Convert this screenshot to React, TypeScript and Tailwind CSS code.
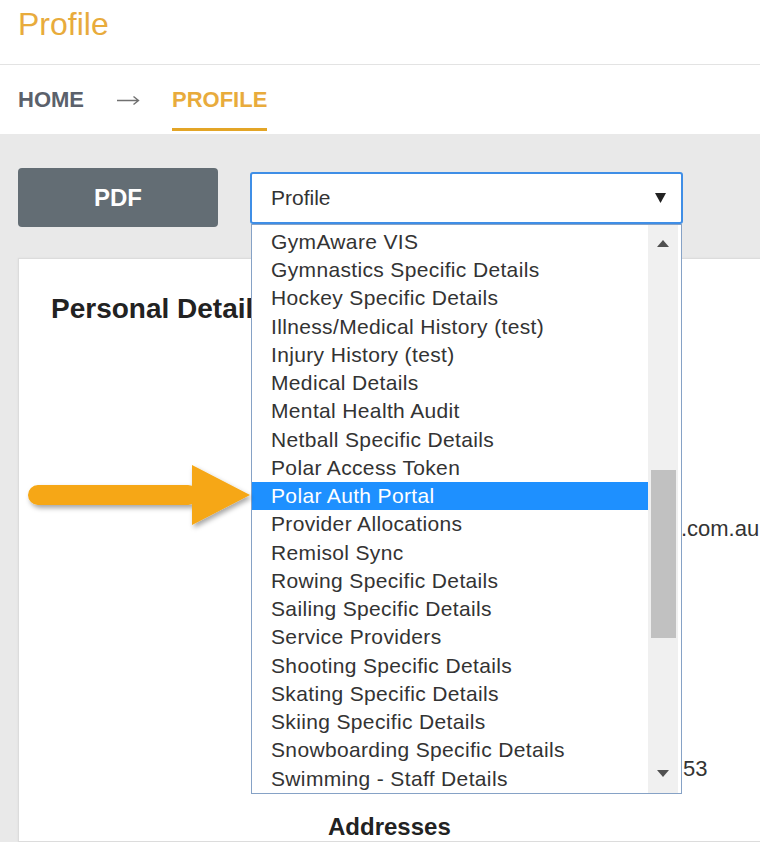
const OPTIONS = [
  "GymAware VIS",
  "Gymnastics Specific Details",
  "Hockey Specific Details",
  "Illness/Medical History (test)",
  "Injury History (test)",
  "Medical Details",
  "Mental Health Audit",
  "Netball Specific Details",
  "Polar Access Token",
  "Polar Auth Portal",
  "Provider Allocations",
  "Remisol Sync",
  "Rowing Specific Details",
  "Sailing Specific Details",
  "Service Providers",
  "Shooting Specific Details",
  "Skating Specific Details",
  "Skiing Specific Details",
  "Snowboarding Specific Details",
  "Swimming - Staff Details",
];

const SELECTED = "Polar Auth Portal";

// rows of the details table; the open dropdown covers everything but the tails
// of two values, so the covered part is kept for spacing only
const DETAILS: { hidden: string; shown: string }[] = [
  { hidden: "James", shown: "" },
  { hidden: "Smith", shown: "" },
  { hidden: "1/01/1990", shown: "" },
  { hidden: "Male", shown: "" },
  { hidden: "james@vis", shown: ".com.au" },
  { hidden: "Rowing", shown: "" },
  { hidden: "Senior", shown: "" },
  { hidden: "Active", shown: "" },
  { hidden: "jsmith", shown: "" },
  { hidden: "", shown: "" },
  { hidden: "0400 123 4", shown: "53" },
];

function Triangle({ up }: { up?: boolean }) {
  return (
    <svg width="12" height="7" viewBox="0 0 12 7">
      <polygon points={up ? "0,7 6,0 12,7" : "0,0 12,0 6,7"} fill="currentColor" />
    </svg>
  );
}

function ProfileSelect() {
  return (
    <div className="relative w-[433px] h-[52px]">
      <div className="h-full flex items-center justify-between border-2 border-[#3f8ee6] rounded-[3px] bg-white pl-[19px] pr-[15px]">
        <span className="text-[21px] text-[#333]">Profile</span>
        <svg width="11" height="10" viewBox="0 0 11 10" className="text-[#222]">
          <polygon points="0,0 11,0 5.5,10" fill="currentColor" />
        </svg>
      </div>

      <div className="absolute left-[1px] top-[52px] w-[431px] h-[570px] z-10 flex border border-[#86a2c6] bg-white">
        <ul className="flex-1 overflow-hidden pt-[3px]">
          {OPTIONS.map((opt) => (
            <li
              key={opt}
              className={`h-[28.25px] flex items-center pl-[19px] text-[21px] tracking-[0.35px] whitespace-nowrap ${
                opt === SELECTED ? "bg-[#1e90ff] text-white" : "text-[#333]"
              }`}>
              {opt}
            </li>
          ))}
        </ul>
        <div className="w-[30px] mr-[3px] flex flex-col bg-[#f0f0f0]">
          <div className="h-[38px] flex items-center justify-center text-[#505050]">
            <Triangle up />
          </div>
          <div className="flex-1 pt-[207px]">
            <div className="h-[168px] ml-[3px] mr-[2px] bg-[#c1c1c1]" />
          </div>
          <div className="h-[38px] flex items-center justify-center text-[#505050]">
            <Triangle />
          </div>
        </div>
      </div>
    </div>
  );
}

function PointerArrow() {
  return (
    <svg
      width="240"
      height="85"
      viewBox="0 0 240 85"
      className="absolute left-[20px] top-[455px] z-20 pointer-events-none">
      <defs>
        <filter id="shadow" x="-10%" y="-30%" width="120%" height="160%">
          <feDropShadow dx="2" dy="3" stdDeviation="2.5" floodColor="#000" floodOpacity="0.35" />
        </filter>
      </defs>
      <g filter="url(#shadow)" fill="#f6a713">
        <rect x="8" y="30" width="170" height="20" rx="10" />
        <polygon points="172,10 230,40 172,70" />
      </g>
    </svg>
  );
}

export default function App() {
  return (
    <div className="relative w-[760px] h-[842px] overflow-hidden flex flex-col bg-white font-['Liberation_Sans',Arial,sans-serif]">
      <header className="h-[65px] shrink-0 border-b border-[#e3e3e3] pl-[18px] pt-[8px]">
        <h1 className="text-[32px] leading-none text-[#e8ab3c]">Profile</h1>
      </header>

      <nav className="h-[69px] shrink-0 flex items-start pt-[24px] pl-[18px] text-[22px] font-bold leading-none">
        <span className="text-[#5b616b]">HOME</span>
        <svg width="24" height="22" viewBox="0 0 24 22" className="mx-[32px] text-[#707070]">
          <path d="M1 11.5H22.5M17.5 7.5L22.5 11.5L17.5 15.5" fill="none" stroke="currentColor" strokeWidth="1.4" />
        </svg>
        <span className="pb-[17px] border-b-[3px] border-[#e3a526] text-[#e8ab3c]">PROFILE</span>
      </nav>

      <main className="flex-1 flex flex-col bg-[#e9e9e9] pl-[18px] pt-[34px]">
        <div className="flex items-center gap-[32px]">
          <button className="w-[200px] h-[59px] rounded-[4px] bg-[#636d74] text-white text-[24px] font-bold">
            PDF
          </button>
          <ProfileSelect />
        </div>

        <section className="flex-1 mt-[31px] -mr-[10px] bg-white border border-[#dcdcdc] shadow-[0_0_2px_rgba(0,0,0,0.06)] pl-[32px] pt-[36px]">
          <h2 className="text-[28px] leading-none font-bold text-[#222]">Personal Details</h2>
          <div className="ml-[522px] mt-[26px]">
            {DETAILS.map((row, i) => (
              <div key={i} className="h-[40px] text-[22px] leading-[40px] text-[#333] whitespace-nowrap">
                <span className="invisible">{row.hidden}</span>
                {row.shown}
              </div>
            ))}
          </div>
          <h3 className="ml-[277px] mt-[26px] text-[24px] leading-none font-bold text-[#222]">Addresses</h3>
        </section>
      </main>

      <PointerArrow />
    </div>
  );
}
